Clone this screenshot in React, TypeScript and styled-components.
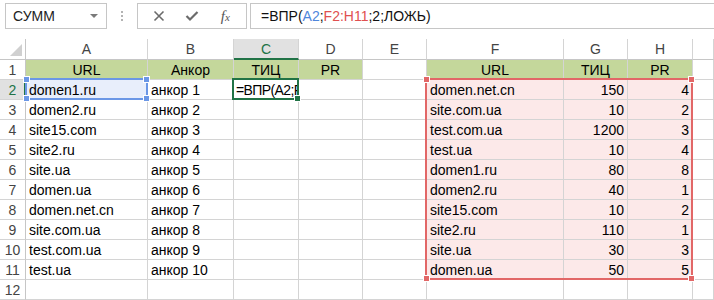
import React from "react";
import styled, { createGlobalStyle } from "styled-components";

const GlobalStyle = createGlobalStyle`
    html, body {
        margin: 0;
        padding: 0;
        background: #ffffff;
        overflow: hidden;
    }
    body {
        font-family: "Liberation Sans", Arial, sans-serif;
        color: #000;
    }
`;

// column widths incl. right gridline
const COLS = [26, 122, 86, 65, 64, 64, 137, 64, 65];
const COL_NAMES = ["A", "B", "C", "D", "E", "F", "G", "H", ""];
const HEADER_H = 21;
const ROW_H = 20;

// x of the gridline on the right side of column i (0 = row header)
const lineX = (i: number) => COLS.slice(0, i + 1).reduce((a, b) => a + b, 0) - 1;
// y (inside sheet) of the gridline under row r (0 = column header)
const lineY = (r: number) => HEADER_H - 1 + r * ROW_H;

type Fill = "green" | "pink" | "blue" | "none";

interface ICellData {
    text: string;
    align?: "left" | "center" | "right";
    fill?: Fill;
    editing?: boolean;
}

const leftTable = [
    ["domen1.ru", "анкор 1"],
    ["domen2.ru", "анкор 2"],
    ["site15.com", "анкор 3"],
    ["site2.ru", "анкор 4"],
    ["site.ua", "анкор 5"],
    ["domen.ua", "анкор 6"],
    ["domen.net.cn", "анкор 7"],
    ["site.com.ua", "анкор 8"],
    ["test.com.ua", "анкор 9"],
    ["test.ua", "анкор 10"],
];

const rightTable: [string, number, number][] = [
    ["domen.net.cn", 150, 4],
    ["site.com.ua", 10, 2],
    ["test.com.ua", 1200, 3],
    ["test.ua", 10, 4],
    ["domen1.ru", 80, 8],
    ["domen2.ru", 40, 1],
    ["site15.com", 10, 2],
    ["site2.ru", 110, 1],
    ["site.ua", 30, 3],
    ["domen.ua", 50, 5],
];

const buildRows = (): ICellData[][] => {
    const rows: ICellData[][] = [];
    rows.push([
        { text: "URL", align: "center", fill: "green" },
        { text: "Анкор", align: "center", fill: "green" },
        { text: "ТИЦ", align: "center", fill: "green" },
        { text: "PR", align: "center", fill: "green" },
        { text: "" },
        { text: "URL", align: "center", fill: "green" },
        { text: "ТИЦ", align: "center", fill: "green" },
        { text: "PR", align: "center", fill: "green" },
        { text: "" },
    ]);
    for (let i = 0; i < 10; i++) {
        const [url, anchor] = leftTable[i];
        const [rUrl, tic, pr] = rightTable[i];
        rows.push([
            { text: url, fill: i === 0 ? "blue" : "none" },
            { text: anchor },
            // cell being edited: Excel clips the formula at the cell edge
            i === 0 ? { text: "=ВПР(A2;F2:H11;2;ЛОЖЬ)", editing: true } : { text: "" },
            { text: "" },
            { text: "" },
            { text: rUrl, fill: "pink" },
            { text: String(tic), align: "right", fill: "pink" },
            { text: String(pr), align: "right", fill: "pink" },
            { text: "" },
        ]);
    }
    rows.push(Array.from({ length: 9 }, () => ({ text: "" })));
    return rows;
};

const CrossIcon = () => (
    <svg width="12" height="12" viewBox="0 0 12 12">
        <path d="M1.5 1.5 L10.5 10.5 M10.5 1.5 L1.5 10.5" stroke="#6b6b6b" strokeWidth="1.6" fill="none" />
    </svg>
);

const CheckIcon = () => (
    <svg width="14" height="12" viewBox="0 0 14 12">
        <path d="M1.5 6 L5 9.5 L12.5 2" stroke="#6b6b6b" strokeWidth="2.2" fill="none" />
    </svg>
);

const CornerTriangle = () => (
    <svg width="12" height="12" viewBox="0 0 12 12">
        <polygon points="12,0 12,12 0,12" fill="#d0d0d0" />
    </svg>
);

const Handles: React.FC<{ color: string }> = ({ color }) => (
    <>
        <Handle color={color} $x="left" $y="top" />
        <Handle color={color} $x="right" $y="top" />
        <Handle color={color} $x="left" $y="bottom" />
        <Handle color={color} $x="right" $y="bottom" />
    </>
);

const App: React.FC = () => {
    const rows = buildRows();

    return (
        <Page>
            <GlobalStyle />
            <Toolbar>
                <NameBox>
                    <span>СУММ</span>
                    <DropArrow />
                </NameBox>
                <Grip>
                    <i /><i /><i />
                </Grip>
                <ButtonBox>
                    <ToolButton><CrossIcon /></ToolButton>
                    <ToolButton><CheckIcon /></ToolButton>
                    <ToolButton><Fx>f<small>x</small></Fx></ToolButton>
                </ButtonBox>
                <FormulaInput>
                    =ВПР(<RefBlue>A2</RefBlue>;<RefRed>F2:H11</RefRed>;2;ЛОЖЬ)
                </FormulaInput>
            </Toolbar>

            <Sheet>
                <Corner><CornerTriangle /></Corner>
                {COL_NAMES.map((name, i) => (
                    <ColHeader key={i} $selected={name === "C"}>{name}</ColHeader>
                ))}

                {rows.map((row, r) => (
                    <React.Fragment key={r}>
                        <RowHeader $selected={r === 1}>{r + 1}</RowHeader>
                        {row.map((cell, c) => (
                            <Cell
                                key={c}
                                $fill={cell.fill || "none"}
                                $align={cell.align || "left"}
                                $editing={!!cell.editing}
                            >
                                {cell.text}
                            </Cell>
                        ))}
                    </React.Fragment>
                ))}

                <RangeBox
                    color="#6b97e6"
                    style={{ left: lineX(0), top: lineY(1) - 1, width: lineX(1) - lineX(0) + 1, height: lineY(2) - lineY(1) + 2 }}
                >
                    <Handles color="#6b97e6" />
                </RangeBox>
                <RangeBox
                    color="#e26767"
                    style={{ left: lineX(5) - 1, top: lineY(1) - 1, width: lineX(8) - lineX(5) + 2, height: lineY(11) - lineY(1) + 2 }}
                >
                    <Handles color="#e26767" />
                </RangeBox>
                <ActiveCell
                    style={{ left: lineX(2) - 1, top: lineY(1) - 1, width: lineX(3) - lineX(2) + 2, height: lineY(2) - lineY(1) + 2 }}
                >
                    <FillHandle />
                </ActiveCell>
            </Sheet>
        </Page>
    );
};

export default App;

const Page = styled.div`
    width: 714px;
    height: 300px;
    overflow: hidden;
    background: #fff;
`;

const Toolbar = styled.div`
    display: flex;
    align-items: flex-start;
    height: 39px;
    padding: 3px 0 0 5px;
    box-sizing: border-box;
`;

const NameBox = styled.div`
    width: 102px;
    height: 26px;
    box-sizing: border-box;
    border: 1px solid #c6c6c6;
    display: flex;
    align-items: center;
    justify-content: space-between;
    padding: 0 7px 0 7px;
    font-size: 14px;
    color: #222;
`;

const DropArrow = styled.span`
    width: 0;
    height: 0;
    border-left: 4px solid transparent;
    border-right: 4px solid transparent;
    border-top: 4px solid #7a7a7a;
    margin-right: 1px;
`;

const Grip = styled.div`
    width: 30px;
    height: 26px;
    display: flex;
    flex-direction: column;
    align-items: center;
    justify-content: center;
    gap: 2px;

    i {
        display: block;
        width: 2px;
        height: 2px;
        background: #b3b3b3;
    }
`;

const ButtonBox = styled.div`
    width: 110px;
    height: 26px;
    box-sizing: border-box;
    border: 1px solid #c6c6c6;
    display: flex;
    align-items: center;
    justify-content: space-around;
    padding: 0 4px;
`;

const ToolButton = styled.div`
    width: 30px;
    display: flex;
    align-items: center;
    justify-content: center;
`;

const Fx = styled.span`
    font-family: "Liberation Serif", "Times New Roman", serif;
    font-style: italic;
    font-size: 15px;
    color: #555;

    small {
        font-size: 11px;
    }
`;

const FormulaInput = styled.div`
    flex: 1;
    margin-left: 3px;
    height: 26px;
    box-sizing: border-box;
    border: 1px solid #c6c6c6;
    border-right: none;
    display: flex;
    align-items: center;
    padding-left: 10px;
    font-size: 14px;
    white-space: pre;
    color: #111;
`;

const RefBlue = styled.span`
    color: #4f86dc;
`;

const RefRed = styled.span`
    color: #e05050;
`;

const Sheet = styled.div`
    position: relative;
    display: grid;
    grid-template-columns: ${COLS.map(w => `${w}px`).join(" ")} 1fr;
    grid-template-rows: ${HEADER_H}px repeat(12, ${ROW_H}px);
`;

const HeaderBase = styled.div`
    box-sizing: border-box;
    display: flex;
    align-items: center;
    justify-content: center;
    font-size: 14px;
    color: #444;
    background: #fff;
`;

const Corner = styled(HeaderBase)`
    border-right: 1px solid #c6c6c6;
    border-bottom: 1px solid #c6c6c6;
    align-items: flex-end;
    justify-content: flex-end;
    padding: 0 3px 3px 0;
`;

const ColHeader = styled(HeaderBase)<{ $selected: boolean }>`
    border-right: 1px solid #d4d4d4;
    border-bottom: ${p => (p.$selected ? "2px solid #217346" : "1px solid #c6c6c6")};
    background: ${p => (p.$selected ? "#e1e1e1" : "#fff")};
    color: ${p => (p.$selected ? "#217346" : "#444")};
    padding-top: ${p => (p.$selected ? "1px" : "0")};
`;

const RowHeader = styled(HeaderBase)<{ $selected: boolean }>`
    border-right: ${p => (p.$selected ? "2px solid #217346" : "1px solid #c6c6c6")};
    border-bottom: 1px solid #d4d4d4;
    background: ${p => (p.$selected ? "#e1e1e1" : "#fff")};
    color: ${p => (p.$selected ? "#217346" : "#444")};
    padding-left: ${p => (p.$selected ? "1px" : "0")};
`;

const fillColors: Record<Fill, string> = {
    green: "#c4d79b",
    pink: "#fce9e9",
    blue: "#e8eefb",
    none: "#fff",
};

const Cell = styled.div<{ $fill: Fill; $align: "left" | "center" | "right"; $editing: boolean }>`
    box-sizing: border-box;
    border-right: 1px solid #d4d4d4;
    border-bottom: 1px solid #d4d4d4;
    background: ${p => fillColors[p.$fill]};
    display: flex;
    align-items: center;
    justify-content: ${p => (p.$align === "center" ? "center" : p.$align === "right" ? "flex-end" : "flex-start")};
    padding: 1px 3px 0 ${p => (p.$editing ? "2px" : "3px")};
    font-size: 14px;
    letter-spacing: ${p => (p.$editing ? "-0.6px" : "normal")};
    white-space: nowrap;
    overflow: hidden;
    color: #000;
`;

const RangeBox = styled.div<{ color: string }>`
    position: absolute;
    box-sizing: border-box;
    border: 2px solid ${p => p.color};
    pointer-events: none;
`;

const Handle = styled.span<{ color: string; $x: "left" | "right"; $y: "top" | "bottom" }>`
    position: absolute;
    width: 5px;
    height: 5px;
    background: ${p => p.color};
    border: 1px solid #fff;
    ${p => p.$x}: -4px;
    ${p => p.$y}: -4px;
`;

const ActiveCell = styled.div`
    position: absolute;
    box-sizing: border-box;
    border: 2px solid #217346;
    pointer-events: none;
`;

const FillHandle = styled.span`
    position: absolute;
    right: -4px;
    bottom: -4px;
    width: 5px;
    height: 5px;
    background: #217346;
    border: 1px solid #fff;
`;
